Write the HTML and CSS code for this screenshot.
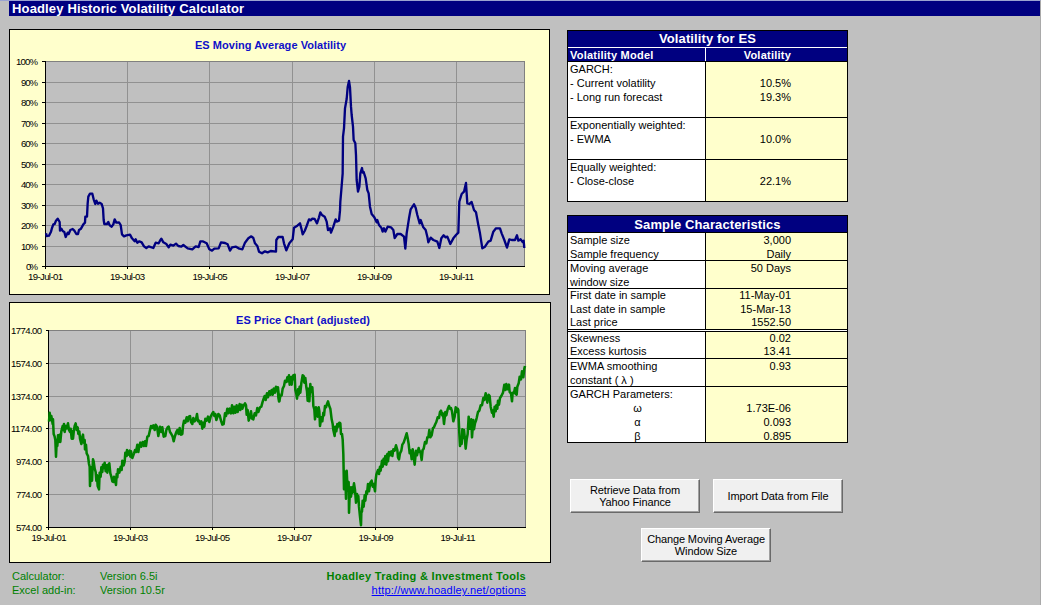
FILE: index.html
```
<!DOCTYPE html>
<html lang="en">
<head>
<meta charset="utf-8">
<title>Hoadley Historic Volatility Calculator</title>
<link rel="stylesheet" href="styles.css">
</head>
<body>
<h1 class="banner">Hoadley Historic Volatility Calculator</h1>
<main class="sheet">
  <section class="charts">
    <svg class="chart" width="541" height="266" viewBox="9 29 541 266">
      <rect class="frame" x="9.5" y="29.5" width="540" height="265"/>
      <text class="chart-title" x="195" y="49" textLength="151">ES Moving Average Volatility</text>
      <rect class="plot" x="45.5" y="61.5" width="479" height="205"/>
      <path class="grid" d="M46 82.5H524M46 102.5H524M46 123.5H524M46 143.5H524M46 164.5H524M46 184.5H524M46 205.5H524M46 225.5H524M46 246.5H524M127.5 62V266M209.5 62V266M292.5 62V266M374.5 62V266M456.5 62V266"/>
      <path class="axis" d="M45.5 61V269M42 266.5H525M42 61.5H46M42 82.5H46M42 102.5H46M42 123.5H46M42 143.5H46M42 164.5H46M42 184.5H46M42 205.5H46M42 225.5H46M42 246.5H46M127.5 266V269M209.5 266V269M292.5 266V269M374.5 266V269M456.5 266V269"/>
      <g class="labels end">
        <text x="38" y="65" textLength="22">100%</text><text x="38" y="85.500" textLength="17">90%</text><text x="38" y="106" textLength="17">80%</text><text x="38" y="126.500" textLength="17">70%</text><text x="38" y="147" textLength="17">60%</text><text x="38" y="167.500" textLength="17">50%</text><text x="38" y="188" textLength="17">40%</text><text x="38" y="208.500" textLength="17">30%</text><text x="38" y="229" textLength="17">20%</text><text x="38" y="249.500" textLength="17">10%</text><text x="38" y="269.500" textLength="12">0%</text>
      </g>
      <g class="labels">
        <text x="28" y="280" textLength="35">19-Jul-01</text><text x="110" y="280" textLength="35">19-Jul-03</text><text x="192.500" y="280" textLength="35">19-Jul-05</text><text x="275" y="280" textLength="35">19-Jul-07</text><text x="357" y="280" textLength="35">19-Jul-09</text><text x="439" y="280" textLength="35">19-Jul-11</text>
      </g>
      <g class="series vol">
        <polyline transform="scale(.33333)" points="138,700 140,708 147,707 153,695 156,684 160,673 164,672 168,662 173,656 179,666 180,692 184,686 188,693 193,696 197,711 203,698 206,702 211,690 218,687 223,692 229,702 234,702 237,690 243,686 250,673 255,668 256,650 261,650 263,610 265,590 270,581 277,581 281,598 286,612 289,602 294,611 299,608 305,612 309,625 311,660 313,672 321,672 325,666 329,676 335,680 340,673 344,658 349,668 357,667 362,675 366,703 372,709 379,706 390,704 396,715 404,724 407,718 412,728 418,724 425,727 432,739 439,744 446,739 460,744 467,728 476,730 480,722 484,716 490,727 499,732 506,742 511,734 520,737 528,731 535,738 544,740 550,735 563,745 577,748 587,739 596,741 601,724 608,724 620,730 628,748 636,752 643,746 656,745 663,727 675,729 683,733 690,752 696,742 708,740 718,746 727,748 735,728 745,715 754,709 760,714 765,730 772,738 777,755 786,760 795,754 803,757 812,753 828,755 829,720 835,711 848,711 852,730 859,751 868,730 878,718 882,683 892,677 900,670 904,685 908,703 914,693 920,678 927,658 932,661 937,656 944,657 951,670 957,652 961,637 966,645 974,650 980,665 984,690 990,685 993,698 1000,680 1007,658 1010,665 1017,662 1020,632 1021,605 1024,570 1028,520 1029,410 1032,385 1035,325 1040,297 1043,262 1047,243 1050,262 1053,320 1055,345 1059,380 1061,420 1066,430 1068,465 1070,540 1074,575 1078,560 1081,520 1086,504 1088,518 1091,516 1097,535 1102,570 1106,580 1110,620 1115,642 1123,652 1130,667 1132,660 1137,675 1144,683 1148,695 1152,685 1156,695 1163,680 1173,682 1180,690 1184,714 1192,702 1202,702 1212,710 1216,746 1220,700 1227,655 1232,628 1242,613 1247,623 1252,645 1259,670 1262,660 1270,682 1277,690 1282,710 1285,727 1292,713 1300,720 1312,725 1318,744 1324,715 1331,706 1337,712 1342,710 1351,732 1360,715 1368,705 1375,698 1378,605 1385,582 1392,575 1398,549 1400,580 1402,610 1408,612 1415,606 1422,630 1428,637 1435,675 1440,700 1447,745 1455,740 1465,725 1472,722 1480,695 1488,685 1500,685 1505,700 1513,720 1521,743 1528,718 1535,720 1545,720 1551,706 1555,722 1562,718 1568,726 1571,722 1573,744"/>
      </g>
    </svg>
    <svg class="chart" width="542" height="261" viewBox="9 302 542 261">
      <rect class="frame" x="9.5" y="302.5" width="541" height="260"/>
      <text class="chart-title" x="236" y="324" textLength="134">ES Price Chart (adjusted)</text>
      <rect class="plot" x="48.5" y="330.5" width="477" height="197"/>
      <path class="grid" d="M49 363.500H525M49 396.500H525M49 428.500H525M49 461.500H525M49 494.500H525M130.500 331V527M212.500 331V527M294.500 331V527M375.500 331V527M457.500 331V527"/>
      <path class="axis" d="M48.500 330V530M46 527.500H526M46 330.500H49M46 363.500H49M46 396.500H49M46 428.500H49M46 461.500H49M46 494.500H49M130.500 527V530M212.500 527V530M294.500 527V530M375.500 527V530M457.500 527V530"/>
      <g class="labels end">
        <text x="42" y="333.500" textLength="31">1774.00</text><text x="42" y="366.500" textLength="31">1574.00</text><text x="42" y="399.500" textLength="31">1374.00</text><text x="42" y="432" textLength="31">1174.00</text><text x="42" y="465" textLength="26">974.00</text><text x="42" y="498" textLength="26">774.00</text><text x="42" y="530.500" textLength="26">574.00</text>
      </g>
      <g class="labels">
        <text x="31.500" y="541" textLength="35">19-Jul-01</text><text x="113" y="541" textLength="35">19-Jul-03</text><text x="195" y="541" textLength="35">19-Jul-05</text><text x="277" y="541" textLength="35">19-Jul-07</text><text x="358.500" y="541" textLength="35">19-Jul-09</text><text x="440.500" y="541" textLength="35">19-Jul-11</text>
      </g>
      <g class="series price">
        <polyline transform="translate(0 290) scale(.33333)" points="147,395 149,368 152,390 154,378 158,402 159,388 161,432 164,440 166,450 168,500 170,458 172,468 174,436 177,456 179,434 181,456 184,424 188,408 190,420 192,402 194,426 197,408 200,415 204,400 207,420 210,426 212,416 215,446 218,424 219,446 222,418 224,408 227,400 230,420 233,412 235,432 238,424 240,446 244,462 247,440 249,434 251,458 254,450 255,478 258,464 260,490 264,498 267,522 269,530 270,588 273,532 276,572 278,528 279,508 281,514 284,536 287,546 289,572 291,556 293,588 297,598 299,548 302,560 304,532 307,546 309,524 312,534 314,518 317,544 320,526 322,548 325,524 328,520 331,550 334,560 337,574 340,576 342,560 345,570 348,585 350,552 352,562 354,538 358,548 362,530 365,540 367,512 371,526 374,515 376,488 380,498 381,480 384,494 389,482 391,500 393,484 397,504 402,490 405,480 408,486 412,464 415,486 418,468 421,458 424,470 428,456 432,468 435,454 438,468 442,440 446,438 450,420 453,408 457,414 460,406 464,420 467,404 471,410 475,438 480,410 484,426 487,412 491,440 496,438 499,420 503,412 506,410 510,426 514,432 518,440 521,454 525,438 529,426 532,420 536,432 539,414 543,434 547,432 549,408 552,392 556,398 560,382 563,394 567,380 570,378 573,396 577,402 580,384 584,394 588,388 591,372 594,394 597,392 600,402 604,394 607,416 610,398 613,410 616,386 620,392 624,380 628,396 632,380 636,372 640,366 643,378 646,372 649,390 655,372 659,376 663,392 667,404 671,402 675,370 678,378 682,356 685,370 689,356 693,370 696,346 700,370 703,350 706,368 710,346 713,366 717,350 719,342 721,360 725,344 727,356 731,346 735,340 738,346 740,374 743,360 746,392 750,380 753,364 756,386 760,388 764,370 768,376 772,354 775,366 780,352 784,350 788,335 791,326 794,318 797,330 801,310 804,322 808,304 812,314 815,300 818,312 821,296 825,308 828,290 831,294 834,292 837,334 838,310"/>
        <polyline transform="translate(270 290) scale(.33333)" points="0,308 5,304 8,314 12,296 15,306 20,292 23,294 25,320 28,334 31,318 35,316 38,296 42,288 45,272 49,276 52,262 54,274 57,256 59,284 62,262 65,284 67,260 70,256 72,268 74,254 76,300 79,312 81,326 84,298 86,314 89,290 91,308 94,280 98,256 101,258 103,278 106,264 109,292 111,304 113,332 116,296 118,334 121,282 123,306 127,292 129,322 130,348 133,358 135,388 138,352 141,360 143,380 146,352 148,364 150,408 154,382 157,394 160,368 162,376 165,348 168,352 171,342 174,334 177,346 181,356 185,388 188,402 190,420 194,438 196,410 199,424 202,402 205,410 208,398 211,400 213,432 216,432 218,448 220,492 222,598 223,544 226,556 228,626 230,542 233,602 236,576 237,668 240,592 243,620 246,592 248,608 252,580 255,600 258,638 261,612 263,626 265,618 267,650 270,680 273,706 274,668 276,664 278,632 281,650 284,616 286,632 289,604 291,612 294,582 297,604 301,578 305,572 308,590 311,582 315,604 317,570 319,554 324,540 327,552 330,530 332,542 336,512 338,530 341,506 343,522 346,498 349,524 352,492 354,514 357,486 360,496 364,484 367,498 370,478 374,482 378,466 382,480 384,502 387,508 390,490 394,482 397,464 401,458 405,446 410,430 413,444 416,462 419,490 422,482 425,508 428,478 430,490 434,524 438,482 441,496 446,474 449,486 451,484 455,510 458,480 461,476 465,456 469,460 472,442 475,442 478,420 481,442 485,436 489,414 492,412 496,402 499,396 503,382 507,384 510,366 513,362 517,376 519,370 522,402 526,366 529,376 533,358 537,348 540,356 543,354 546,364 550,394 554,380 557,352 560,366 563,356 565,360 567,408 568,430 570,468 573,440 575,462 577,418 579,444 582,420 584,440 587,476 590,448 593,432 596,380 599,416 602,400 604,388 606,442 610,390 612,418 615,400 618,392 620,384 624,366 628,362 632,346 636,346 640,324 643,330 647,310 650,324 652,338 656,314 659,318 662,350 666,368 668,362 671,380 674,350 677,364 679,346 682,356 684,332 687,344 690,324 694,318 699,308 703,284 706,300 709,282 713,298 717,284 719,306 723,310 726,334 728,308 732,308 735,294 737,312 740,314 742,290 746,280 749,260 753,268 756,244 760,262 763,236 765,228"/>
      </g>
    </svg>
    <footer class="credits">
      <span>Calculator:</span><span>Version 6.5i</span><strong>Hoadley Trading &amp; Investment Tools</strong>
      <span>Excel add-in:</span><span>Version 10.5r</span><a href="#">http://www.hoadley.net/options</a>
    </footer>
  </section>
  <section class="panel">
    <div class="table">
      <h2 class="title underlined">Volatility for ES</h2>
      <div class="row heads"><div class="name">Volatility Model</div><div class="value">Volatility</div></div>
      <div class="row r56"><div class="name">GARCH:<br>- Current volatility<br>- Long run forecast</div><div class="value"><br>10.5%<br>19.3%</div></div>
      <div class="row r42"><div class="name">Exponentially weighted:<br>- EWMA</div><div class="value"><br>10.0%</div></div>
      <div class="row r42"><div class="name">Equally weighted:<br>- Close-close</div><div class="value"><br>22.1%</div></div>
    </div>
    <div class="table">
      <h2 class="title">Sample Characteristics</h2>
      <div class="row r28"><div class="name">Sample size<br>Sample frequency</div><div class="value">3,000<br>Daily</div></div>
      <div class="row r28"><div class="name">Moving average<br>window size</div><div class="value">50 Days</div></div>
      <div class="row r41"><div class="name">First date in sample<br>Last date in sample<br>Last price</div><div class="value">11-May-01<br>15-Mar-13<br>1552.50</div></div>
      <div class="rule"></div>
      <div class="row r27"><div class="name">Skewness<br>Excess kurtosis</div><div class="value">0.02<br>13.41</div></div>
      <div class="row r28"><div class="name">EWMA smoothing<br>constant ( λ )</div><div class="value">0.93</div></div>
      <div class="row r56"><div class="name">GARCH Parameters:<div class="greek">ω<br>α<br>β</div></div><div class="value"><br>1.73E-06<br>0.093<br>0.895</div></div>
    </div>
    <div class="buttons">
      <button>Retrieve Data from<br>Yahoo Finance</button>
      <button>Import Data from File</button>
      <button>Change Moving Average<br>Window Size</button>
    </div>
  </section>
</main>
</body>
</html>
```
FILE: styles.css
```
* { box-sizing: border-box; }
body {
  margin: 0;
  height: 605px;
  overflow: hidden;
  background: #c0c0c0;
  border-top: 1px solid #9ba3d0;
  border-right: 1px solid #a9a9a9;
  font: 11px/14px "Liberation Sans", Arial, sans-serif;
  color: #000;
  white-space: nowrap;
}
.banner {
  margin: 0 0 13px 9px;
  padding-left: 3px;
  height: 15px;
  background: #000080;
  color: #fff;
  font-size: 13px;
  line-height: 15px;
  letter-spacing: .15px;
}
.sheet { display: flex; gap: 16px; padding-left: 9px; }
.charts { width: 542px; display: flex; flex-direction: column; }
.chart { display: block; margin-bottom: 7px; }
.chart:nth-child(2) { margin-bottom: 6px; }
.frame { fill: #ffffcc; stroke: #000; }
.plot { fill: #c0c0c0; stroke: #808080; }
.grid { stroke: #919191; fill: none; }
.axis { stroke: #000; fill: none; }
.frame, .plot, .grid, .axis { shape-rendering: crispEdges; }
.labels { font-size: 9.6px; }
.end { text-anchor: end; }
.chart-title { font-size: 11px; font-weight: bold; fill: #1010c8; }
.series { fill: none; stroke-width: 7; stroke-linejoin: round; }
.vol { stroke: #000080; }
.price { stroke: #008000; stroke-width: 7.6; }
.credits {
  display: grid;
  grid-template-columns: 88px 160px 1fr;
  padding: 0 25px 0 3px;
  color: #008000;
}
.credits > :nth-child(3n) { text-align: right; }
.credits strong { letter-spacing: .3px; }
.credits a { color: #0000ff; letter-spacing: .2px; }
.panel { width: 281px; padding-top: 1px; }
.table { border: 1px solid #000; margin-bottom: 13px; background: #000; }
.title {
  margin: 0 0 1px;
  height: 16px;
  background: #000080;
  color: #fff;
  font-size: 13px;
  line-height: 17px;
  letter-spacing: .12px;
  text-align: center;
}
.underlined { margin: 0; height: 17px; border-bottom: 1px solid #fff; line-height: 16px; }
.row {
  display: grid;
  grid-template-columns: 137px 141px;
  grid-template-rows: 100%;
  column-gap: 1px;
  margin-bottom: 1px;
}
.row:last-child { margin-bottom: 0; }
.name { background: #fff; padding-left: 2px; }
.value { background: #ffffcc; padding-right: 56px; text-align: right; }
.heads { height: 13px; background: #fff; font-weight: bold; color: #fff; letter-spacing: .23px; }
.heads > div { background: #000080; }
.r56 { height: 55px; }
.r42 { height: 41px; }
.r28 { height: 27px; }
.r41 { height: 40px; line-height: 13.7px; }
.rule { height: 1px; margin-bottom: 1px; background: #fff; }
.r27 { height: 26px; line-height: 13.4px; }
.greek { text-align: center; }
.buttons { display: grid; grid-template-columns: 130px 130px; gap: 15px 13px; padding: 23px 0 0 3px; }
.buttons button {
  height: 34px;
  padding: 0;
  border: 1px solid;
  border-color: #fff #696969 #696969 #fff;
  box-shadow: inset -1px -1px #a0a0a0;
  background: #f0f0f0;
  color: #000;
  font: 11px/12px "Liberation Sans", Arial, sans-serif;
  letter-spacing: -.12px;
}
.buttons button:last-child { grid-column: 1 / 3; width: 130px; margin-left: 71px; }
```
